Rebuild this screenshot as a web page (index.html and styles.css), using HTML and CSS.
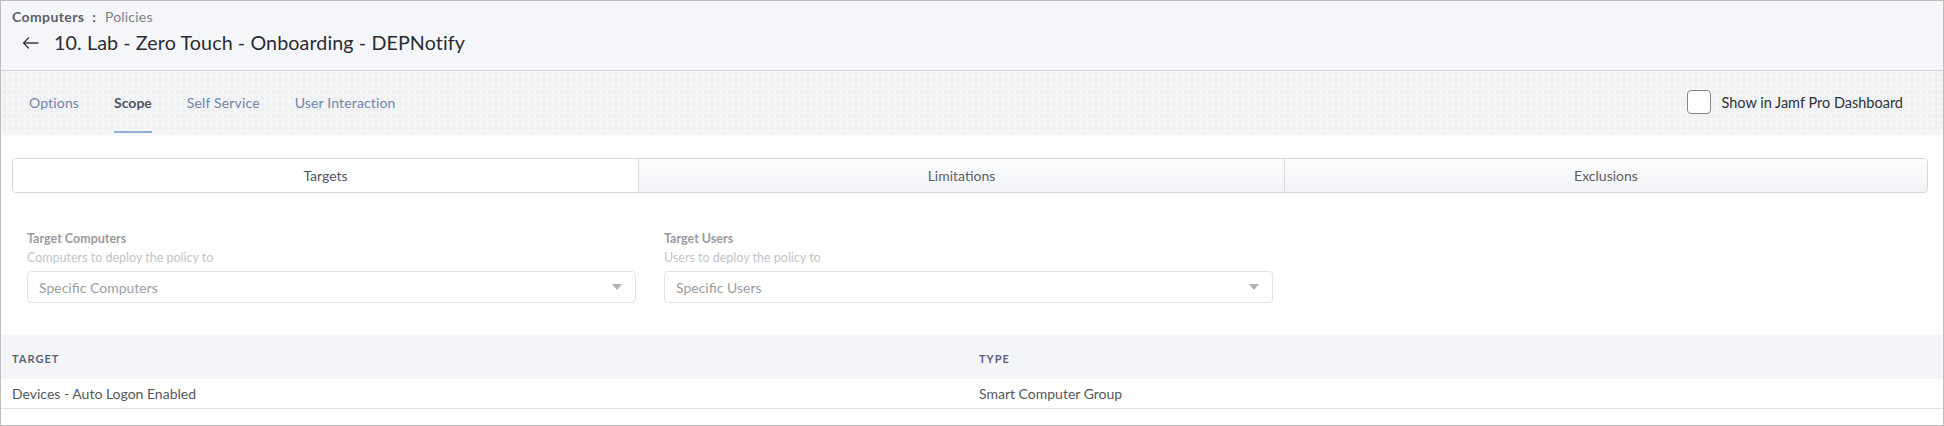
FILE: index.html
```html
<!DOCTYPE html>
<html>
<head>
<meta charset="utf-8">
<link rel="stylesheet" href="styles.css">
</head>
<body>
<div class="frame">
  <header class="page-head">
    <div class="crumbs"><span class="crumb-main">Computers</span><span class="crumb-sep">:</span><span class="crumb-sub">Policies</span></div>
    <div class="title-row">
      <svg class="back" width="17" height="12" viewBox="0 0 17 12"><path d="M16 6H1.5M6.5 1L1.5 6l5 5" fill="none" stroke="#3a3d44" stroke-width="1.3" stroke-linecap="round" stroke-linejoin="round"/></svg>
      <h1 class="title">10. Lab - Zero Touch - Onboarding - DEPNotify</h1>
    </div>
  </header>
  <nav class="tabbar">
    <div class="tabs">
      <a class="tab">Options</a>
      <a class="tab active">Scope</a>
      <a class="tab">Self Service</a>
      <a class="tab">User Interaction</a>
    </div>
    <label class="dash"><span class="box"></span><span>Show in Jamf Pro Dashboard</span></label>
  </nav>
  <main class="content">
    <div class="segments">
      <div class="seg active seg-a">Targets</div>
      <div class="seg seg-b">Limitations</div>
      <div class="seg seg-c">Exclusions</div>
    </div>
    <div class="fields">
      <div class="field">
        <div class="f-label">Target Computers</div>
        <div class="f-help">Computers to deploy the policy to</div>
        <div class="select"><span>Specific Computers</span><span class="caret"></span></div>
      </div>
      <div class="field">
        <div class="f-label">Target Users</div>
        <div class="f-help">Users to deploy the policy to</div>
        <div class="select"><span>Specific Users</span><span class="caret"></span></div>
      </div>
    </div>
  </main>
  <div class="table">
    <div class="thead"><div class="th">Target</div><div class="th">Type</div></div>
    <div class="trow"><div class="td">Devices - Auto Logon Enabled</div><div class="td">Smart Computer Group</div></div>
  </div>
</div>
</body>
</html>
```
FILE: styles.css
```css
* { box-sizing: border-box; }
html, body { margin: 0; padding: 0; background: #fff; }
body { font-family: Lato, "Noto Sans", sans-serif; }
.frame {
  width: 1944px; height: 426px; overflow: hidden;
  border: 1px solid #bdbdbd; background: #fff;
}
.page-head {
  height: 70px; background: #f4f6fa; border-bottom: 1px solid #d3d6dc;
  padding: 7px 0 0 11px;
}
.crumbs { font-size: 14px; line-height: 18px; display: flex; align-items: center; }
.crumb-main { font-weight: 700; color: #5c6069; letter-spacing: 0.4px; }
.crumb-sep { color: #5c6069; font-weight: 700; margin: 0 9px 0 8px; }
.crumb-sub { color: #7b7f88; letter-spacing: 0.2px; }
.title-row { display: flex; align-items: center; margin-top: 5px; padding-left: 10px; }
.back { margin-right: 15px; }
.title { margin: 0; font-size: 19.7px; font-weight: 400; color: #2a2c31; line-height: 24px; letter-spacing: 0.1px; }
.tabbar {
  height: 62px; display: flex; justify-content: space-between; align-items: stretch;
  background-color: #f4f5f7;
  background-image: radial-gradient(circle at 3px 3px, #eef0f2 2px, transparent 2.6px);
  background-size: 6px 6px;
  box-shadow: 0 2px 4px rgba(0,0,0,0.06);
  position: relative;
  padding: 0 0 0 28px;
}
.tabs { display: flex; gap: 35px; align-items: stretch; }
.tab {
  font-size: 14px; color: #6f86b0; display: flex; align-items: center;
  padding-top: 3px; border-bottom: 2px solid transparent; letter-spacing: 0.15px;
}
.tab.active { color: #4e5567; font-weight: 700; border-bottom-color: #94acd8; letter-spacing: 0; }
.dash { display: flex; align-items: center; gap: 10px; font-size: 14.5px; color: #2f3137; padding-right: 40px; }
.box { width: 24px; height: 24px; border: 1px solid #85878c; border-radius: 4px; background: #fff; }
.content { padding: 25px 15px 0 11px; }
.segments {
  display: flex; height: 35px; border: 1px solid #d6d8dd; border-radius: 4px; overflow: hidden;
}
.seg {
  display: flex; align-items: center; justify-content: center;
  font-size: 14px; color: #5b5f67;
  background: linear-gradient(#fbfcfd, #f1f3f7);
  border-left: 1px solid #d6d8dd;
}
.seg-a { width: 625px; border-left: 0; }
.seg-b { width: 646px; }
.seg-c { flex: 1; }
.seg.active { background: #fff; color: #4e5567; }
.fields { display: flex; gap: 28px; padding: 38px 0 0 15px; }
.field { width: 609px; }
.f-label { font-size: 12.5px; font-weight: 700; color: #9a9b9e; line-height: 16px; }
.f-help { font-size: 12.5px; color: #c3c4c7; line-height: 16px; margin-top: 3px; }
.select {
  margin-top: 5px; height: 32px; border: 1px solid #e2e3e6; border-radius: 4px;
  display: flex; align-items: center; justify-content: space-between;
  padding: 0 13px 0 11px; font-size: 14px; color: #9c9ea2;
}
.caret { width: 0; height: 0; border-left: 5px solid transparent; border-right: 5px solid transparent; border-top: 6px solid #aeb2bb; }
.table { margin-top: 32px; }
.thead { display: grid; grid-template-columns: 967px 1fr; height: 44px; background: #f4f5f8; align-items: center; }
.th { padding-left: 11px; font-size: 11px; font-weight: 700; letter-spacing: 1px; text-transform: uppercase; color: #59647a; padding-top: 2px; }
.trow { display: grid; grid-template-columns: 967px 1fr; height: 30px; align-items: center; border-bottom: 1px solid #e1e3e7; }
.td { padding-left: 11px; font-size: 14px; color: #545860; padding-bottom: 1px; }
```
